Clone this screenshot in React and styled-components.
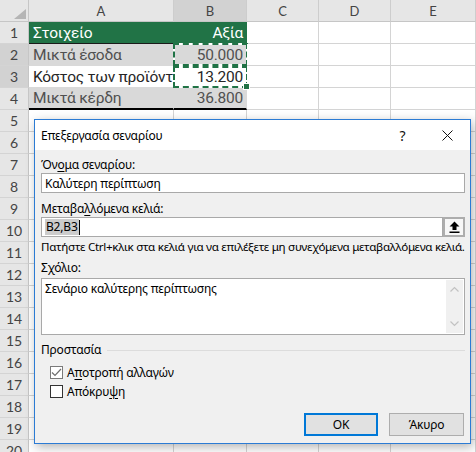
import React from "react";
import styled, { createGlobalStyle } from "styled-components";

const GlobalStyle = createGlobalStyle`
  html, body {
    margin: 0;
    padding: 0;
    background: #fff;
  }
  body {
    width: 476px;
    height: 452px;
    overflow: hidden;
  }
`;

const Page = styled.div`
  position: relative;
  width: 476px;
  height: 452px;
  overflow: hidden;
  background: #fff;
`;

/* ---------- spreadsheet ---------- */

const Sheet = styled.div`
  display: grid;
  grid-template-columns: 29px 145px 73px 72px 72px 1fr;
  grid-auto-rows: 22px;
  font-family: Lato, "Liberation Sans", sans-serif;
`;

const Corner = styled.div`
  display: flex;
  align-items: flex-end;
  justify-content: flex-end;
  padding: 0 2px 2px 0;
  background: #e6e6e6;
  border-right: 1px solid #c6c6c6;
  border-bottom: 1px solid #c6c6c6;
  box-sizing: border-box;
`;

const ColHead = styled.div`
  display: flex;
  align-items: center;
  justify-content: center;
  box-sizing: border-box;
  background: ${({ $active }) => ($active ? "#d2d2d2" : "#e6e6e6")};
  border-right: 1px solid #cdcdcd;
  border-bottom: 1px solid #c6c6c6;
  color: #444;
  font-size: 13px;
`;

const RowHead = styled.div`
  display: flex;
  align-items: center;
  justify-content: center;
  box-sizing: border-box;
  background: ${({ $active }) => ($active ? "#d2d2d2" : "#e6e6e6")};
  border-right: 1px solid #c6c6c6;
  border-bottom: 1px solid #d4d4d4;
  color: #444;
  font-size: 14px;
`;

const cellLook = {
  head: { bg: "#217346", color: "#fff", right: "#217346", bottom: "1px solid #1a1a1a" },
  band: { bg: "#d9d9d9", color: "#505050", right: "#d9d9d9", bottom: "1px solid #d9d9d9" },
  plain: { bg: "#fff", color: "#262626", right: "#fff", bottom: "1px solid #d9d9d9" },
  last: { bg: "#d9d9d9", color: "#505050", right: "#d9d9d9", bottom: "2px solid #000" },
  empty: { bg: "#fff", color: "#000", right: "#d4d4d4", bottom: "1px solid #d4d4d4" },
};

const Cell = styled.div`
  position: relative;
  display: flex;
  align-items: center;
  justify-content: ${({ $right }) => ($right ? "flex-end" : "flex-start")};
  box-sizing: border-box;
  padding: 0 3px 0 4px;
  overflow: ${({ $ants }) => ($ants ? "visible" : "hidden")};
  white-space: nowrap;
  font-family: Roboto, "Liberation Sans", sans-serif;
  font-size: 15.5px;
  letter-spacing: -0.25px;
  background: ${({ $kind }) => cellLook[$kind].bg};
  color: ${({ $kind }) => cellLook[$kind].color};
  border-right: 1px solid ${({ $kind }) => cellLook[$kind].right};
  border-bottom: ${({ $kind }) => cellLook[$kind].bottom};
`;

const CellText = styled.span`
  position: relative;
  z-index: 1;
`;

const Ants = styled.span`
  position: absolute;
  left: -1px;
  right: -2px;
  top: ${({ $top }) => $top}px;
  bottom: -1px;
  border: 2px dashed #217346;
  background: linear-gradient(${({ $bg }) => $bg}, ${({ $bg }) => $bg}) padding-box,
    linear-gradient(#fff, #fff) border-box;
`;

const FillHandle = styled.span`
  position: absolute;
  right: -4px;
  bottom: -3px;
  width: 5px;
  height: 5px;
  background: #217346;
  border: 1px solid #fff;
  z-index: 2;
`;

/* ---------- dialog ---------- */

const Dialog = styled.div`
  position: absolute;
  left: 34px;
  top: 119px;
  width: 437px;
  height: 325px;
  box-sizing: border-box;
  display: flex;
  flex-direction: column;
  background: #f0f0f0;
  border: 1px solid #2b7bd4;
  box-shadow: 2px 3px 10px rgba(0, 0, 0, 0.3);
  font-family: "Noto Sans", "Open Sans", sans-serif;
  font-size: 12px;
  letter-spacing: -0.2px;
  color: #000;
`;

const TitleBar = styled.div`
  display: flex;
  align-items: center;
  height: 30px;
  background: #fff;
  padding-left: 6px;
`;

const Title = styled.div`
  flex: 1;
  font-size: 12px;
`;

const TitleButton = styled.div`
  display: flex;
  align-items: center;
  justify-content: center;
  width: 45px;
  height: 30px;
  font-size: 14px;
  color: #111;
`;

const Body = styled.div`
  flex: 1;
  display: flex;
  flex-direction: column;
  padding: 0 5px 7px 6px;
`;

const Label = styled.div`
  line-height: 16px;
  height: 16px;
  margin-top: ${({ $gap }) => $gap}px;
  white-space: nowrap;
`;

const Key = styled.span`
  text-decoration: underline;
  text-underline-offset: 2px;
`;

const Input = styled.div`
  flex: 1;
  display: flex;
  align-items: center;
  height: 20px;
  box-sizing: border-box;
  padding: 0 3px;
  background: #fff;
  border: 1px solid #a9a9a9;
  white-space: nowrap;
`;

const RefRow = styled.div`
  display: flex;
  height: 20px;
`;

const Selected = styled.span`
  background: #cccccc;
  line-height: 16px;
  padding: 0 1px;
`;

const Caret = styled.span`
  width: 1px;
  height: 15px;
  background: #000;
`;

const RefButton = styled.div`
  display: flex;
  align-items: center;
  justify-content: center;
  width: 22px;
  height: 20px;
  box-sizing: border-box;
  border: 2px solid #adadad;
  background: #f7f7f7;
`;

const Help = styled.div`
  margin-top: 2px;
  line-height: 16px;
  white-space: nowrap;
  font-size: 11.6px;
  letter-spacing: -0.3px;
`;

const Memo = styled.div`
  display: flex;
  height: 57px;
  margin-top: 2px;
  box-sizing: border-box;
  background: #fff;
  border: 1px solid #a9a9a9;
`;

const MemoText = styled.div`
  flex: 1;
  padding: 2px 3px;
  line-height: 16px;
`;

const ScrollBar = styled.div`
  display: flex;
  flex-direction: column;
  justify-content: space-between;
  align-items: center;
  width: 17px;
  margin: 1px;
  padding: 6px 0;
  box-sizing: border-box;
  background: #f0f0f0;
`;

const Legend = styled.div`
  display: flex;
  align-items: center;
  margin-top: 7px;
  line-height: 16px;
  &::after {
    content: "";
    flex: 1;
    margin-left: 6px;
    border-top: 1px solid #dcdcdc;
  }
`;

const CheckRow = styled.div`
  display: flex;
  align-items: center;
  gap: 4px;
  height: 16px;
  margin: ${({ $gap }) => $gap}px 0 0 9px;
`;

const Box = styled.div`
  display: flex;
  align-items: center;
  justify-content: center;
  width: 13px;
  height: 13px;
  box-sizing: border-box;
  border: 1px solid ${({ $dim }) => ($dim ? "#7a7a7a" : "#333")};
  background: #fff;
`;

const Buttons = styled.div`
  display: flex;
  justify-content: flex-end;
  gap: 11px;
  margin-top: auto;
  margin-right: 1px;
`;

const Button = styled.div`
  display: flex;
  align-items: center;
  justify-content: center;
  width: ${({ $primary }) => ($primary ? 74 : 75)}px;
  height: 23px;
  box-sizing: border-box;
  background: #e1e1e1;
  border: ${({ $primary }) => ($primary ? "2px solid #0078d7" : "1px solid #adadad")};
`;

const rows = [
  { a: "Στοιχείο", b: "Αξία", kind: "head" },
  { a: "Μικτά έσοδα", b: "50.000", kind: "band", ants: true },
  { a: "Κόστος των προϊόντων", b: "13.200", kind: "plain", ants: true, handle: true },
  { a: "Μικτά κέρδη", b: "36.800", kind: "last" },
];

const Chevron = ({ up }) => (
  <svg width="9" height="6" viewBox="0 0 9 6">
    <path
      d={up ? "M0.5 5.5 L4.5 1.5 L8.5 5.5" : "M0.5 0.5 L4.5 4.5 L8.5 0.5"}
      fill="none"
      stroke="#c2c2c2"
      strokeWidth="1.2"
    />
  </svg>
);

const App = () => {
  const sheetRows = [];
  for (let n = 1; n <= 20; n++) {
    const data = rows[n - 1];
    sheetRows.push(
      <React.Fragment key={n}>
        <RowHead $active={n === 2 || n === 3}>{n}</RowHead>
        {data ? (
          <>
            <Cell $kind={data.kind}>
              <CellText>{data.a}</CellText>
            </Cell>
            <Cell $kind={data.kind} $right $ants={data.ants}>
              {data.ants && (
                <Ants $bg={cellLook[data.kind].bg} $top={n === 2 ? -1 : 0} />
              )}
              {data.handle && <FillHandle />}
              <CellText>{data.b}</CellText>
            </Cell>
          </>
        ) : (
          <>
            <Cell $kind="empty" />
            <Cell $kind="empty" />
          </>
        )}
        <Cell $kind="empty" />
        <Cell $kind="empty" />
        <Cell $kind="empty" />
      </React.Fragment>
    );
  }

  return (
    <Page>
      <GlobalStyle />
      <Sheet>
        <Corner>
          <svg width="12" height="10" viewBox="0 0 12 10">
            <path d="M12 0 L12 10 L0 10 Z" fill="#b5b5b5" />
          </svg>
        </Corner>
        <ColHead>A</ColHead>
        <ColHead $active>B</ColHead>
        <ColHead>C</ColHead>
        <ColHead>D</ColHead>
        <ColHead>E</ColHead>
        {sheetRows}
      </Sheet>

      <Dialog>
        <TitleBar>
          <Title>Επεξεργασία σεναρίου</Title>
          <TitleButton>?</TitleButton>
          <TitleButton>
            <svg width="11" height="11" viewBox="0 0 11 11">
              <path d="M0.5 0.5 L10.5 10.5 M10.5 0.5 L0.5 10.5" stroke="#111" strokeWidth="1" />
            </svg>
          </TitleButton>
        </TitleBar>
        <Body>
          <Label $gap={7}>
            Όν<Key>ο</Key>μα σεναρίου:
          </Label>
          <RefRow>
            <Input>Καλύτερη περίπτωση</Input>
          </RefRow>
          <Label $gap={8}>
            Μεταβα<Key>λ</Key>λόμενα κελιά:
          </Label>
          <RefRow>
            <Input>
              <Selected>B2,B3</Selected>
              <Caret />
            </Input>
            <RefButton>
              <svg width="11" height="12" viewBox="0 0 11 12">
                <path d="M5.5 0.5 L10.5 5.5 L7.5 5.5 L7.5 9 L3.5 9 L3.5 5.5 L0.5 5.5 Z" fill="#000" />
                <rect x="0.5" y="10.5" width="10" height="1.5" fill="#000" />
              </svg>
            </RefButton>
          </RefRow>
          <Help>
            Πατήστε Ctrl+κλικ στα κελιά για να επιλέξετε μη συνεχόμενα μεταβαλλόμενα κελιά.
          </Help>
          <Label $gap={5}>
            Σ<Key>χ</Key>όλιο:
          </Label>
          <Memo>
            <MemoText>Σενάριο καλύτερης περίπτωσης</MemoText>
            <ScrollBar>
              <Chevron up />
              <Chevron />
            </ScrollBar>
          </Memo>
          <Legend>Προστασία</Legend>
          <CheckRow $gap={6}>
            <Box $dim>
              <svg width="11" height="9" viewBox="0 0 11 9">
                <path d="M1 4.5 L4 7.5 L10 1" fill="none" stroke="#6e6e6e" strokeWidth="1.2" />
              </svg>
            </Box>
            <span>
              Α<Key>π</Key>οτροπή αλλαγών
            </span>
          </CheckRow>
          <CheckRow $gap={3}>
            <Box />
            <span>
              Απόκρυ<Key>ψ</Key>η
            </span>
          </CheckRow>
          <Buttons>
            <Button $primary>OK</Button>
            <Button>Άκυρο</Button>
          </Buttons>
        </Body>
      </Dialog>
    </Page>
  );
};

export default App;
